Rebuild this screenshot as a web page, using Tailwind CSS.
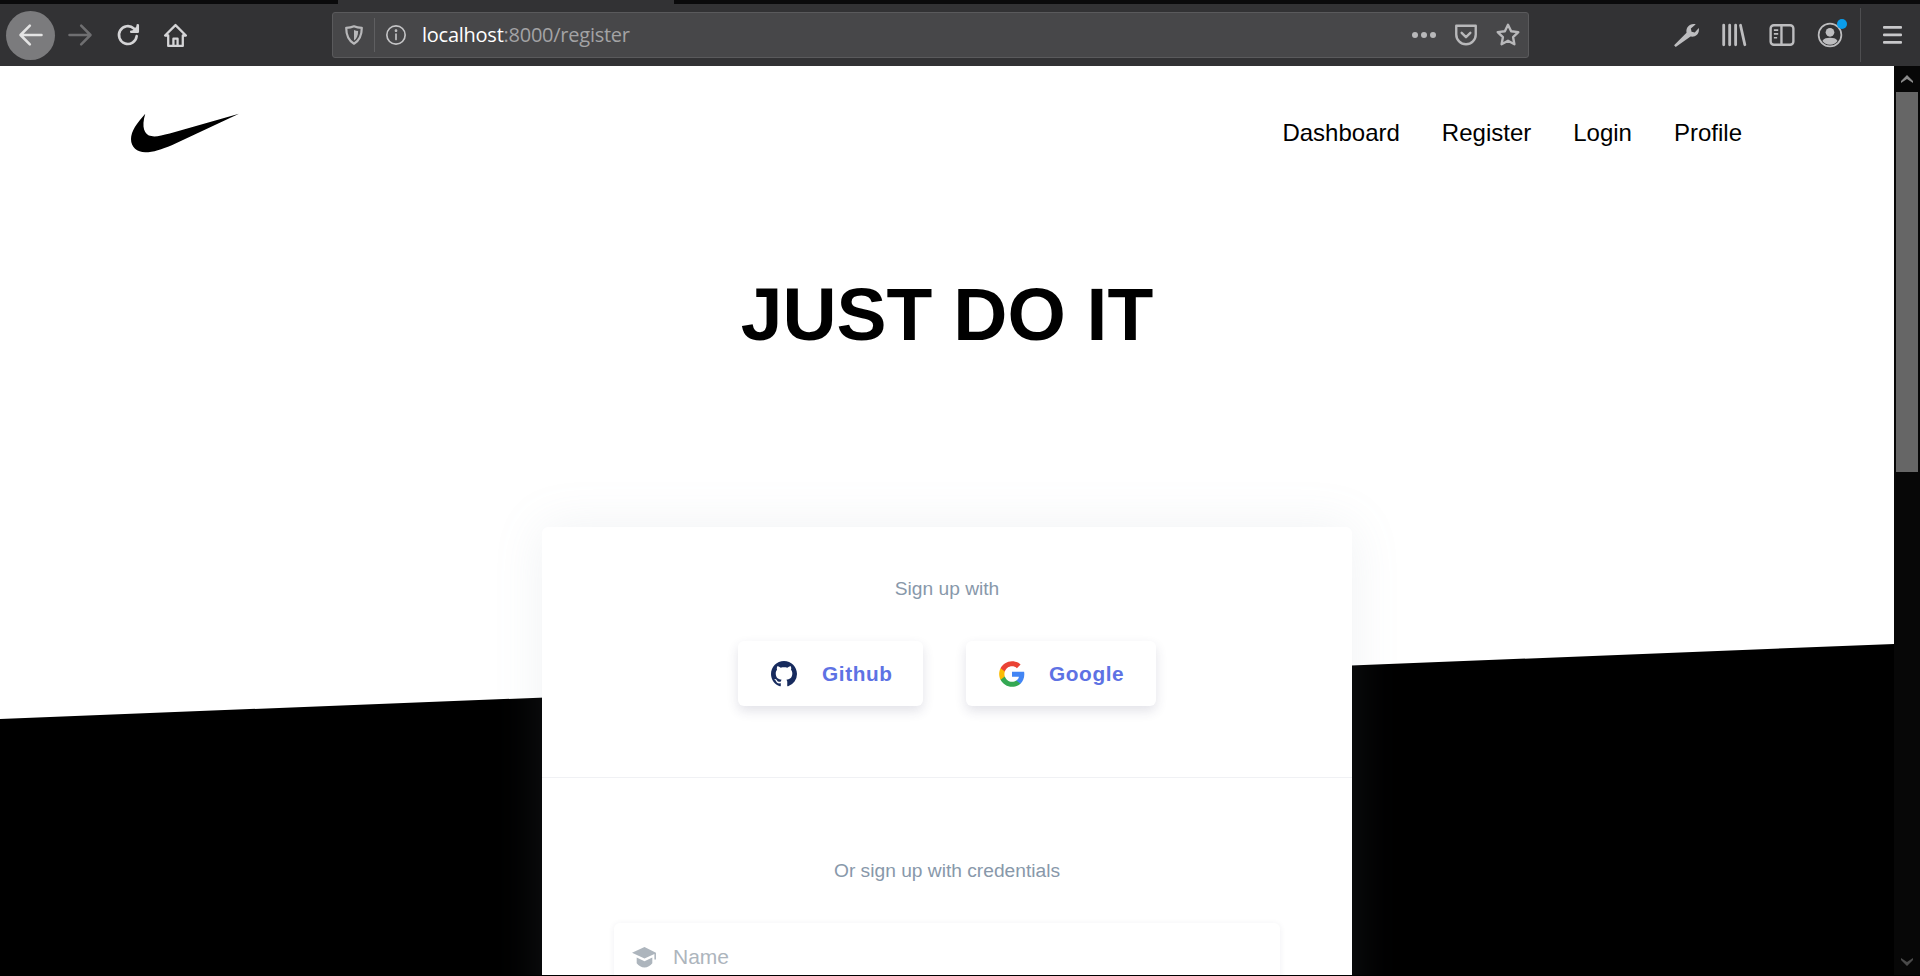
<!DOCTYPE html>
<html lang="en">
<head>
  <meta charset="UTF-8" />
  <meta name="viewport" content="width=device-width, initial-scale=1.0" />
  <title>Register</title>
  <script src="https://cdn.jsdelivr.net/npm/@tailwindcss/browser@4"></script>
</head>
<body class="h-[976px] overflow-hidden bg-black font-['Liberation_Sans',Arial,sans-serif]">
  <!-- tab strip -->
  <div class="h-[4px] bg-[#0a0a0b] pl-[338px]"><div class="h-full w-[336px] bg-[#323234]"></div></div>

  <!-- browser toolbar -->
  <div class="h-[62px] bg-[#323234] flex items-center text-[#c4c4c6]">
    <div class="ml-[6px] w-[49px] h-[49px] rounded-full bg-[#7b7b7d] flex items-center justify-center">
      <svg width="28" height="28" viewBox="0 0 24 24" fill="none" stroke="#e4e4e4" stroke-width="2.2" stroke-linecap="round" stroke-linejoin="round"><path d="M21 12H3.500M11 4l-8 8 8 8"/></svg>
    </div>
    <svg class="ml-[11px]" width="28" height="28" viewBox="0 0 24 24" fill="none" stroke="#6f6f71" stroke-width="2.2" stroke-linecap="round" stroke-linejoin="round"><path d="M3 12h17.500M13 4l8 8-8 8"/></svg>
    <svg class="ml-[21px]" width="26" height="26" viewBox="0 0 24 24" fill="none" stroke="#d4d4d6" stroke-width="2.4" stroke-linecap="round" stroke-linejoin="round"><path d="M20 13a8.200 8.200 0 1 1-2.600-7"/><path d="M21 3v6h-6" fill="#d4d4d6"/></svg>
    <svg class="ml-[22px]" width="25" height="25" viewBox="0 0 24 24" fill="none" stroke="#d4d4d6" stroke-width="2.200" stroke-linejoin="round"><path d="M12 2 2 12h3v10h14V12h3z"/><path d="M10 22v-7h4v7"/></svg>

    <!-- url bar -->
    <div class="ml-[144px] w-[1197px] h-[46px] rounded-[3px] bg-[#474749] border border-[#5a5a5c] flex items-center text-[#b1b1b3]">
      <svg class="ml-[10px]" width="22" height="22" viewBox="0 0 24 24" fill="none" stroke="#b8b8ba" stroke-width="2.4" stroke-linejoin="round"><path d="M12 2.500c3 1.400 5.600 1.700 8.500 1.700 0 8.500-2.500 14-8.500 17.300C6 18.200 3.500 12.700 3.500 4.200 6.400 4.200 9 3.900 12 2.500z"/><path d="M12 6.500c1.500.6 3 .9 4.500 1 0 5-1.500 8.500-4.500 10.500z" fill="#b8b8ba" stroke="none"/></svg>
      <div class="ml-[9px] w-px h-[34px] bg-[#5f5f61]"></div>
      <svg class="ml-[10px]" width="22" height="22" viewBox="0 0 24 24" fill="none" stroke="#c4c4c6" stroke-width="1.800" stroke-linecap="round"><circle cx="12" cy="12" r="10"/><path d="M12 11v6"/><circle cx="12" cy="7.300" r=".6" fill="#c4c4c6"/></svg>
      <span class="ml-[15px] text-[20px] font-['Open_Sans',sans-serif] tracking-[-0.25px] text-white">localhost<span class="text-[#a3a3a5]">:8000/register</span></span>
      <div class="ml-auto flex items-center">
        <svg width="26" height="8" viewBox="0 0 26 8" fill="#b8b8ba"><circle cx="4" cy="4" r="3"/><circle cx="13" cy="4" r="3"/><circle cx="22" cy="4" r="3"/></svg>
        <svg class="ml-[16px]" width="26" height="26" viewBox="0 0 24 24" fill="none" stroke="#b8b8ba" stroke-width="2.200" stroke-linecap="round" stroke-linejoin="round"><path d="M3 3.500h18v8a9 9 0 0 1-18 0z"/><path d="m8 10 4 4 4-4"/></svg>
        <svg class="ml-[16px] mr-[7px]" width="26" height="26" viewBox="0 0 24 24" fill="none" stroke="#b8b8ba" stroke-width="2.200" stroke-linejoin="round"><path d="m12 2.500 2.900 6 6.600.9-4.800 4.600 1.200 6.500-5.900-3.200-5.900 3.200 1.200-6.500L2.500 9.400l6.600-.9z"/></svg>
      </div>
    </div>

    <!-- right hand tools -->
    <svg class="ml-[144px]" width="26" height="26" viewBox="0 0 24 24" fill="#bdbdbf"><path d="M2.500 23 1 21.500 12.500 10C11.800 6.500 13.800 2 19 1.800c.7 0 1.300.1 2 .3l-4.500 4 .6 3 3 .7 3.700-4.300c.9 5-2.500 8.700-7.600 7.900z"/></svg>
    <svg class="ml-[22px]" width="26" height="26" viewBox="0 0 24 24" fill="none" stroke="#bdbdbf" stroke-width="2.600" stroke-linecap="round"><path d="M2.500 3v18M8 3v18M13.500 3v18M18 3l4 18"/></svg>
    <svg class="ml-[22px]" width="26" height="26" viewBox="0 0 24 24" fill="none" stroke="#bdbdbf" stroke-width="2.200"><rect x="1.500" y="3" width="21" height="18" rx="3"/><path d="M11.500 3v18"/><path d="M4.500 7.500h4M4.500 11h4M4.500 14.500h3" stroke-width="1.500"/></svg>
    <div class="relative ml-[22px] w-[26px] h-[26px]">
      <svg width="26" height="26" viewBox="0 0 24 24" fill="none" stroke="#bdbdbf" stroke-width="1.600"><circle cx="12" cy="12" r="10.500"/><circle cx="12" cy="9.500" r="4" fill="#bdbdbf" stroke="none"/><path d="M5 17.500c1.500-2.500 4-3 7-3s5.500.5 7 3c-1.500 2-4 3.500-7 3.500s-5.500-1.500-7-3.500z" fill="#bdbdbf" stroke="none"/></svg>
      <div class="absolute top-[-3px] right-[-4px] w-[10px] h-[10px] rounded-full bg-[#0a9dea]"></div>
    </div>
    <div class="ml-[17px] w-px h-[54px] bg-[#4e4e50]"></div>
    <svg class="ml-[22px]" width="20" height="20" viewBox="0 0 20 20" fill="#c8c8ca"><rect x="0" y="1" width="19" height="2.800" rx="1"/><rect x="0" y="8.500" width="19" height="2.800" rx="1"/><rect x="0" y="16" width="19" height="2.800" rx="1"/></svg>
  </div>

  <div class="flex h-[909px]">
    <!-- page -->
    <main class="relative w-[1894px] h-[909px] overflow-hidden bg-white">
      <!-- slanted black section behind the card -->
      <svg class="absolute inset-0" width="1894" height="909" viewBox="0 0 1894 909"><polygon points="0,653 1894,578 1894,909 0,909" fill="#000"/></svg>

      <div class="relative">
        <nav class="flex items-center justify-between h-[133px] pl-[131px] pr-[152px]">
          <svg width="108" height="40" viewBox="0 0 106 38" fill="#000"><path d="M14 0C6 9 0 17 0 25C0 33 6 38 14 38C22 38 30 35 40 31L106 0L38 19.500C30 21.500 24 23 20 22C13 21 10 13 14 0Z"/></svg>
          <div class="flex gap-[42px] text-[24px] text-black">
            <a>Dashboard</a>
            <a>Register</a>
            <a>Login</a>
            <a>Profile</a>
          </div>
        </nav>

        <h1 class="mt-[69px] text-center text-[75px] leading-[92px] font-bold text-black">JUST DO IT</h1>

        <section class="mt-[167px] mx-auto w-[810px] h-[700px] rounded-[6px] bg-white shadow-[0_0_50px_rgba(136,152,170,0.13)]">
          <div class="h-[251px] border-b border-[#f0f1f4] pt-[49px]">
            <p class="text-center text-[19.2px] leading-[26px] text-[#8898aa]">Sign up with</p>
            <div class="mt-[39px] flex justify-center gap-[43px]">
              <button class="w-[185px] h-[65px] rounded-[6px] bg-white shadow-[0_5px_12px_rgba(50,50,93,0.14)] flex items-center pl-[33px]">
                <svg width="26" height="26" viewBox="0 0 16 16" fill="#172b5e"><path d="M8 0C3.580 0 0 3.580 0 8c0 3.540 2.290 6.530 5.470 7.590.4.070.55-.17.55-.38 0-.19-.01-.82-.01-1.490-2.010.37-2.530-.49-2.690-.94-.09-.23-.48-.94-.82-1.130-.28-.15-.68-.52-.01-.53.63-.01 1.080.58 1.230.82.72 1.210 1.870.87 2.330.66.070-.52.28-.87.51-1.070-1.780-.2-3.640-.89-3.640-3.950 0-.87.31-1.590.82-2.150-.08-.2-.36-1.020.08-2.120 0 0 .67-.21 2.200.82.64-.18 1.320-.27 2-.27.68 0 1.360.09 2 .27 1.530-1.040 2.200-.82 2.200-.82.44 1.100.16 1.920.08 2.120.51.56.82 1.270.82 2.150 0 3.070-1.870 3.750-3.650 3.950.29.25.54.73.54 1.480 0 1.070-.01 1.930-.01 2.200 0 .21.15.46.55.38A8.013 8.013 0 0016 8c0-4.420-3.580-8-8-8z"/></svg>
                <span class="ml-[25px] text-[20.8px] font-bold tracking-[0.6px] text-[#5e72e4]">Github</span>
              </button>
              <button class="w-[190px] h-[65px] rounded-[6px] bg-white shadow-[0_5px_12px_rgba(50,50,93,0.14)] flex items-center pl-[32px]">
                <svg width="28" height="28" viewBox="0 0 24 24"><path fill="#4285F4" d="M22.560 12.250c0-.78-.07-1.530-.2-2.250H12v4.260h5.920c-.26 1.370-1.040 2.530-2.210 3.310v2.770h3.570c2.080-1.920 3.280-4.740 3.280-8.090z"/><path fill="#34A853" d="M12 23c2.970 0 5.460-.98 7.280-2.660l-3.570-2.770c-.98.66-2.230 1.060-3.710 1.060-2.860 0-5.290-1.930-6.160-4.530H2.180v2.840C3.990 20.530 7.700 23 12 23z"/><path fill="#FBBC05" d="M5.840 14.090c-.22-.66-.35-1.360-.35-2.090s.13-1.430.35-2.090V7.070H2.180C1.430 8.550 1 10.220 1 12s.43 3.450 1.180 4.930l3.660-2.840z"/><path fill="#EA4335" d="M12 5.380c1.620 0 3.060.56 4.210 1.640l3.150-3.150C17.450 2.090 14.970 1 12 1 7.700 1 3.990 3.470 2.180 7.070l3.660 2.840c.87-2.600 3.300-4.530 6.160-4.530z"/></svg>
                <span class="ml-[23px] text-[20.8px] font-bold tracking-[0.6px] text-[#5e72e4]">Google</span>
              </button>
            </div>
          </div>
          <div class="px-[72px] pt-[80px]">
            <p class="text-center text-[19.2px] leading-[26px] text-[#8898aa]">Or sign up with credentials</p>
            <div class="mt-[39px] h-[68px] rounded-[6px] bg-white shadow-[0_1px_6px_rgba(50,50,93,0.08)] flex items-center pl-[18px]">
              <svg width="25" height="22" viewBox="0 0 24 21" fill="#adb5bd"><path d="M12 1 0 6.500 12 12l9.500-4.400V13H23V6.500z"/><path d="M4.500 11v5.500C6.500 19 9 20.500 12 20.500s5.500-1.500 7.500-4V11L12 14.500z"/></svg>
              <span class="ml-[16px] text-[21px] text-[#adb5bd]">Name</span>
            </div>
          </div>
        </section>
      </div>
    </main>

    <!-- scrollbar -->
    <div class="w-[26px] h-[909px] bg-[#070707] flex flex-col items-center">
      <svg class="mt-[8px]" width="12" height="10" viewBox="0 0 12 10" fill="#8a8a8a"><path d="M6 1 12 7v2L6 5 0 9V7z"/></svg>
      <div class="mt-[8px] w-[22px] h-[380px] bg-[#666666]"></div>
      <svg class="mt-auto mb-[8px]" width="12" height="10" viewBox="0 0 12 10" fill="#4a4a4a"><path d="M6 9 0 3V1l6 4 6-4v2z"/></svg>
    </div>
  </div>
</body>
</html>
